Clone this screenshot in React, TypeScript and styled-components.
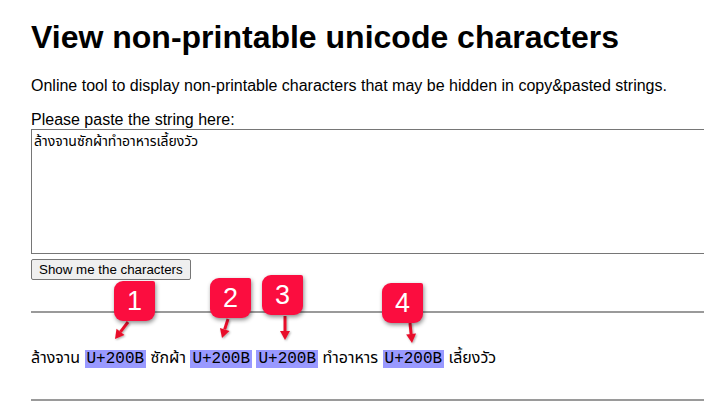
import React from "react";
import styled, { createGlobalStyle } from "styled-components";

const Global = createGlobalStyle`
  html, body { margin: 0; padding: 0; background: #fff; }
  body { font-family: "Liberation Sans", Arial, sans-serif; color: #000; }
`;

const Page = styled.div`
  position: relative;
  width: 704px;
  height: 403px;
  overflow: hidden;
  padding-left: 31px;
  box-sizing: border-box;
`;

const Title = styled.h1`
  margin: 19px 0 21px;
  font-size: 32px;
  line-height: 37px;
  font-weight: bold;
  white-space: nowrap;
`;

const Intro = styled.p`
  margin: 0 0 16px;
  font-size: 16px;
  line-height: 18px;
  white-space: nowrap;
`;

const Label = styled.div`
  font-size: 16px;
  line-height: 18px;
`;

const Input = styled.textarea`
  display: block;
  box-sizing: border-box;
  width: 760px;
  height: 125px;
  margin: 0;
  padding: 3px 2px;
  border: 1px solid #767676;
  border-radius: 0;
  font-family: "Liberation Sans", Tahoma, "Noto Sans Thai", sans-serif;
  font-size: 14px;
  line-height: 16px;
  resize: none;
  outline: none;
`;

const Button = styled.button`
  display: block;
  margin-top: 5px;
  box-sizing: border-box;
  height: 21px;
  padding: 0 7px;
  background: #efefef;
  border: 1px solid #767676;
  border-radius: 2px;
  font-family: "Liberation Sans", Arial, sans-serif;
  font-size: 13.33px;
  color: #000;
`;

const Rule = styled.hr<{ $top: number }>`
  margin: ${(p) => p.$top}px 0 0;
  width: 760px;
  border: none;
  border-top: 2px solid #9a9a9a;
  height: 0;
`;

const Result = styled.div`
  margin-top: 36px;
  font-size: 16px;
  line-height: 18px;
  font-family: "Liberation Sans", Tahoma, "Noto Sans Thai", sans-serif;
  white-space: nowrap;
`;

const Code = styled.span`
  background: #9999ff;
  font-family: "Liberation Mono", "Courier New", monospace;
  font-size: 16px;
  padding: 0 2px;
`;

const Badge = styled.div<{ $x: number; $y: number }>`
  position: absolute;
  left: ${(p) => p.$x}px;
  top: ${(p) => p.$y}px;
  width: 41px;
  height: 40px;
  background: #fb0d3f;
  border-radius: 9px 2px 9px 9px;
  box-shadow: 1px 2px 4px rgba(0, 0, 0, 0.45);
  color: #fff;
  font-family: "Liberation Sans", Arial, sans-serif;
  font-size: 27px;
  line-height: 40px;
  text-align: center;
`;

const ArrowLayer = styled.svg`
  position: absolute;
  left: 0;
  top: 0;
  width: 704px;
  height: 403px;
  pointer-events: none;
  overflow: visible;
`;

const badges = [
  { n: 1, x: 114, y: 281 },
  { n: 2, x: 210, y: 278 },
  { n: 3, x: 262, y: 275 },
  { n: 4, x: 382, y: 283 },
];

const arrows = [
  { x1: 128, y1: 322, x2: 115, y2: 339 },
  { x1: 228, y1: 319, x2: 222, y2: 338 },
  { x1: 285, y1: 316, x2: 285, y2: 340 },
  { x1: 410, y1: 323, x2: 412, y2: 343 },
];

function Arrow({ x1, y1, x2, y2 }: { x1: number; y1: number; x2: number; y2: number }) {
  const dx = x2 - x1;
  const dy = y2 - y1;
  const len = Math.hypot(dx, dy);
  const ux = dx / len;
  const uy = dy / len;
  const hl = 9;
  const hw = 5;
  const bx = x2 - ux * hl;
  const by = y2 - uy * hl;
  const px = -uy;
  const py = ux;
  return (
    <g filter="url(#ash)">
      <line x1={x1} y1={y1} x2={bx} y2={by} stroke="#e8102a" strokeWidth={3} />
      <polygon
        points={`${x2},${y2} ${bx + px * hw},${by + py * hw} ${bx - px * hw},${by - py * hw}`}
        fill="#e8102a"
      />
    </g>
  );
}

export default function App() {
  return (
    <>
      <Global />
      <Page>
        <Title>View non-printable unicode characters</Title>
        <Intro>Online tool to display non-printable characters that may be hidden in copy&amp;pasted strings.</Intro>
        <Label>Please paste the string here:</Label>
        <Input defaultValue={"ล้างจาน\u200Bซักผ้า\u200B\u200Bทำอาหาร\u200Bเลี้ยงวัว"} />
        <Button>Show me the characters</Button>
        <Rule $top={31} />
        <Result>
          ล้างจาน <Code>U+200B</Code> ซักผ้า <Code>U+200B</Code> <Code>U+200B</Code> ทำอาหาร <Code>U+200B</Code> เลี้ยงวัว
        </Result>
        <Rule $top={31} />
        <ArrowLayer viewBox="0 0 704 403">
          <defs>
            <filter id="ash" x="-50%" y="-50%" width="200%" height="200%">
              <feDropShadow dx="1" dy="1" stdDeviation="1" floodColor="#000" floodOpacity="0.35" />
            </filter>
          </defs>
          {arrows.map((a, i) => (
            <Arrow key={i} {...a} />
          ))}
        </ArrowLayer>
        {badges.map((b) => (
          <Badge key={b.n} $x={b.x} $y={b.y}>
            {b.n}
          </Badge>
        ))}
      </Page>
    </>
  );
}
